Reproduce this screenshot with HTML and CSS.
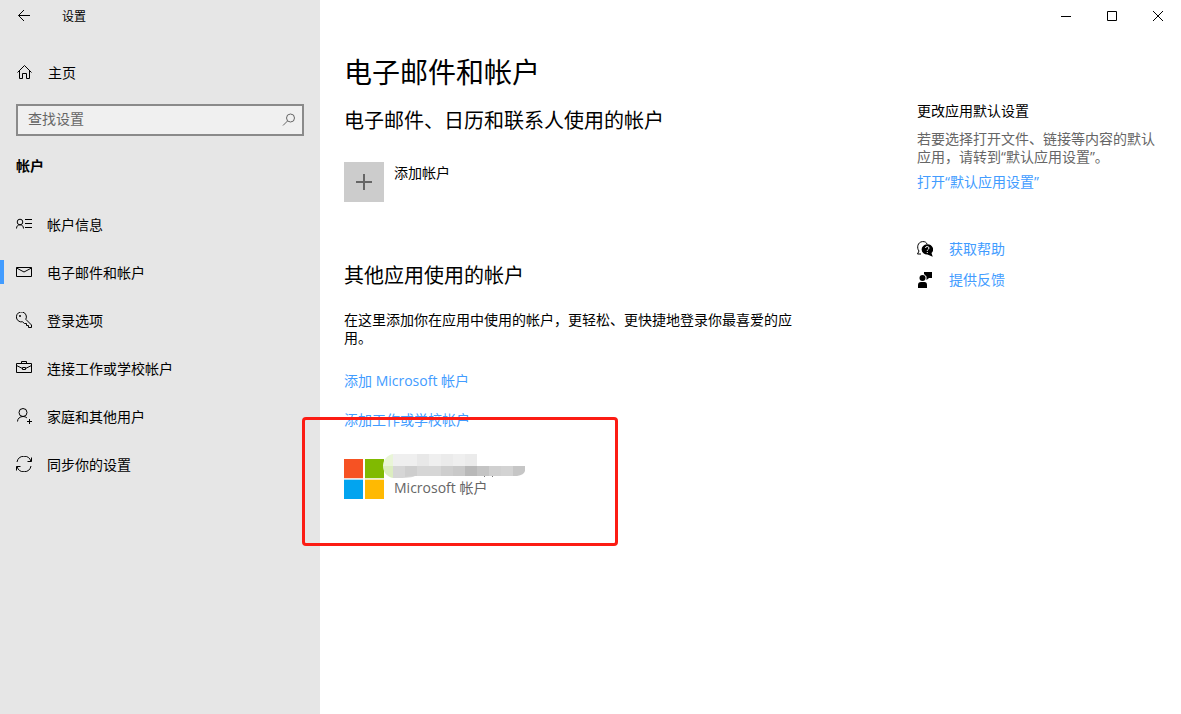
FILE: index.html
```html
<!DOCTYPE html>
<html lang="zh-CN">
<head>
<meta charset="utf-8">
<meta name="viewport" content="width=device-width, initial-scale=1">
<title>设置</title>
<link rel="stylesheet" href="styles.css">
</head>
<body>
<div class="window">
  <aside class="sidebar">
    <header class="titlebar">
      <button class="back" type="button" aria-label="返回">
        <svg class="icon" viewBox="0 0 16 16"><path d="M14 7.500H2.500M8 2L2.500 7.500 8 13"/></svg>
      </button>
      <span class="app-name">设置</span>
    </header>
    <a class="home" href="#">
      <svg class="icon" viewBox="0 0 16 16"><path d="M.5 8.500L7.500 1.500 14.500 8.500M2.500 7V14.500H5.500V9.500H9.500V14.500H12.500V7"/></svg>
      <span class="label">主页</span>
    </a>
    <form class="search">
      <input class="search-input" type="text" placeholder="查找设置" aria-label="查找设置">
      <button class="search-button" type="button" aria-label="搜索">
        <svg class="icon" viewBox="0 0 16 16"><circle cx="9.500" cy="6" r="4"/><path d="M6.500 9L2 13.500"/></svg>
      </button>
    </form>
    <h2 class="group">帐户</h2>
    <nav class="nav">
      <a class="nav-item" href="#">
        <svg class="icon" viewBox="0 0 16 16"><circle cx="4" cy="6" r="2.800"/><path d="M.5 12.500C.5 10 2 8.800 4 8.800S7.500 10 7.500 12.500M9 3.500H16M9 7.500H16M9 11.500H16"/></svg>
        <span class="label">帐户信息</span>
      </a>
      <a class="nav-item nav-item-active" href="#" aria-current="page">
        <svg class="icon" viewBox="0 0 16 16"><path d="M.5 3.500H15.500V12.500H.5ZM.5 4L8 8 15.500 4"/></svg>
        <span class="label">电子邮件和帐户</span>
      </a>
      <a class="nav-item" href="#">
        <svg class="icon" viewBox="0 0 16 16"><path d="M6.500 9.800L8.500 11.500H10.500V13.500H12.500V15.500H15.500V13L9.800 7.300A5 5 0 1 0 6.500 9.800Z"/><circle class="solid" cx="4" cy="4" r="1"/></svg>
        <span class="label">登录选项</span>
      </a>
      <a class="nav-item" href="#">
        <svg class="icon" viewBox="0 0 16 16"><path d="M.5 3.500H15.500V12.500H.5ZM5.500 3.500V1.500H10.500V3.500M.5 5.500L6.500 8.500M9.500 8.500L15.500 5.500M6.500 7.500H9.500V9.500H6.500Z"/></svg>
        <span class="label">连接工作或学校帐户</span>
      </a>
      <a class="nav-item" href="#">
        <svg class="icon" viewBox="0 0 16 16"><circle cx="7" cy="4.500" r="4"/><path d="M1.500 13.500C1.500 10.500 4 8.500 7 8.500 8.500 8.500 10 9 11 10M13.500 11V16M11 13.500H16"/></svg>
        <span class="label">家庭和其他用户</span>
      </a>
      <a class="nav-item" href="#">
        <svg class="icon" viewBox="0 0 16 16"><path d="M1 6A7.200 7.200 0 0 1 15 5.500M15.500 1.500V5.500H11.500M15 10A7.200 7.200 0 0 1 1 10.500M.5 14.500V10.500H4.500"/></svg>
        <span class="label">同步你的设置</span>
      </a>
    </nav>
  </aside>

  <div class="content">
    <header class="window-controls">
      <button class="control" type="button" aria-label="最小化"><svg class="icon" viewBox="0 0 16 16"><path d="M3 8.500H13"/></svg></button>
      <button class="control" type="button" aria-label="最大化"><svg class="icon" viewBox="0 0 16 16"><path d="M3.500 3.500H12.500V12.500H3.500Z"/></svg></button>
      <button class="control" type="button" aria-label="关闭"><svg class="icon" viewBox="0 0 16 16"><path d="M3 3L13 13M13 3L3 13"/></svg></button>
    </header>
    <div class="columns">
      <main class="main">
        <h1 class="title">电子邮件和帐户</h1>
        <h2 class="subtitle">电子邮件、日历和联系人使用的帐户</h2>
        <button class="add" type="button">
          <span class="add-tile"><svg class="plus" viewBox="0 0 16 16"><path d="M8 0V16M0 8H16"/></svg></span>
          <span class="label">添加帐户</span>
        </button>
        <h2 class="subtitle subtitle-apps">其他应用使用的帐户</h2>
        <p class="description">在这里添加你在应用中使用的帐户，更轻松、更快捷地登录你最喜爱的应用。</p>
        <a class="link" href="#">添加 Microsoft 帐户</a>
        <div class="accounts">
          <a class="link" href="#">添加工作或学校帐户</a>
          <div class="account">
            <svg class="logo" viewBox="0 0 40 40" role="img" aria-label="Microsoft">
              <path fill="#f65223" d="M0 0h19v19H0z"/><path fill="#80ba01" d="M21 0h19v19H21z"/>
              <path fill="#02a4ef" d="M0 21h19v19H0z"/><path fill="#ffb902" d="M21 21h19v19H21z"/>
              <path fill="#f9dcd2" d="M0 19h19v1H0z"/><path fill="#e5efcf" d="M21 19h19v1H21z"/>
              <path fill="#a6dff9" d="M0 20h19v1H0z"/><path fill="#fde5a6" d="M21 20h19v1H21z"/>
            </svg>
            <span class="account-type">Microsoft 帐户</span>
            <svg class="mosaic" viewBox="0 0 142 26" aria-hidden="true">
              <path fill="#e9f5d7" d="M10 0C4 1 0 6 0 12H10Z"/><path fill="#dcedc0" d="M0 12C0 18 4 23 10 24V12Z"/>
              <path fill="#efefef" d="M10 0H94V12H10Z"/><path fill="#e8e8e8" d="M34 0H46V12H34Z"/><path fill="#ebebeb" d="M58 0H70V12H58ZM82 0H94V12H82Z"/>
              <path fill="#d6d6d6" d="M10 12H82V22H32C28 24 18 24 10 24Z"/><path fill="#cecece" d="M22 12H34V22H28L22 23ZM58 12H70V22H58Z"/>
              <path fill="#c9c9c9" d="M70 12H82V22H70Z"/><path fill="#b9b9b9" d="M82 12H94V22H82Z"/><path fill="#c4c4c4" d="M94 12H106V22H94Z"/>
              <path fill="#d0d0d0" d="M106 12H118V22H106Z"/><path fill="#d3d3d3" d="M118 12H130V22H118Z"/><path fill="#c6c6c6" d="M130 12H142V17Q141 21 134 22H130Z"/>
              <path fill="#777" d="M101 22H102V23H101ZM109 22H110V23H109Z"/>
            </svg>
          </div>
          <div class="highlight"></div>
        </div>
      </main>
      <aside class="related">
        <h3 class="related-title">更改应用默认设置</h3>
        <p class="related-text">若要选择打开文件、链接等内容的默认应用，请转到“默认应用设置”。</p>
        <a class="link" href="#">打开“默认应用设置”</a>
        <div class="support">
          <a class="link support-link" href="#">
            <svg class="icon" viewBox="0 0 16 16"><path d="M2 10C-.5 7 .5 1 5.500 .6 8 .4 9.500 1.500 10 3M2 10L.5 13H4"/><path class="solid" d="M10 3.200A5.600 5.200 0 1 0 10.500 13.600L15.700 15.700 14.500 12A5.600 5.200 0 0 0 10 3.200Z"/><path class="mark" d="M8.500 7Q8.500 5.500 10.200 5.500T12 7Q12 8 10.300 9.300V10M10.300 11V12"/></svg>
            <span>获取帮助</span>
          </a>
          <a class="link support-link" href="#">
            <svg class="icon" viewBox="0 0 16 16"><circle class="solid" cx="5.500" cy="6" r="3"/><path class="solid" d="M1 16V13Q1 10 4 10H7.500Q10 10 10 13V16ZM7 0H15V6H12L9.500 8V4.500L7 2Z"/></svg>
            <span>提供反馈</span>
          </a>
        </div>
      </aside>
    </div>
  </div>
</div>
</body>
</html>
```
FILE: styles.css
```css
* {
  box-sizing: border-box;
}

body {
  margin: 0;
  background: #fff;
  color: #000;
  font: 14px/18px "Open Sans", "Noto Sans CJK SC", sans-serif;
}

h1, h2, h3, p {
  margin: 0;
  font-weight: 400;
}

a {
  color: inherit;
  text-decoration: none;
}

button {
  padding: 0;
  border: 0;
  background: none;
  color: inherit;
  font: inherit;
}

.window {
  display: flex;
  min-height: 100vh;
}

.sidebar {
  flex: 0 0 320px;
  background: #e6e6e6;
}

.icon {
  display: block;
  flex: none;
  width: 16px;
  height: 16px;
  fill: none;
  stroke: #000;
  stroke-width: 1;
}

.icon .solid {
  fill: #000;
  stroke: none;
}

.icon .mark {
  stroke: #fff;
}

.label {
  padding-top: 2px;
}

.titlebar {
  display: flex;
  align-items: center;
  height: 32px;
  font-size: 12px;
}

.back {
  display: grid;
  place-items: center;
  width: 48px;
  height: 32px;
}

.app-name {
  padding: 2px 0 0 14px;
}

.home {
  display: flex;
  align-items: center;
  gap: 15px;
  height: 48px;
  margin-top: 16px;
  padding: 0 17px;
}

.search {
  display: flex;
  align-items: center;
  height: 32px;
  margin: 8px 16px 0;
  border: 2px solid #8a8a8a;
  background: #f0f0f0;
}

.search-input {
  flex: 1;
  min-width: 0;
  height: 28px;
  padding: 0 10px 4px;
  border: 0;
  outline: 0;
  background: none;
  font: inherit;
}

.search-input::placeholder {
  color: #666;
  opacity: 1;
}

.search-button {
  padding-right: 5px;
}

.search-button .icon {
  stroke: #666;
}

.group {
  padding: 21px 16px 25px;
  font-size: 14px;
  font-weight: 700;
}

.nav-item {
  display: flex;
  align-items: center;
  gap: 15px;
  height: 48px;
  padding: 0 16px;
}

.nav-item-active {
  padding-left: 12px;
}

.nav-item-active::before {
  content: "";
  width: 4px;
  height: 24px;
  margin: 0 -3px 0 -12px;
  background: #429cff;
}

.content {
  flex: 1;
  min-width: 0;
}

.window-controls {
  display: flex;
  justify-content: flex-end;
}

.control {
  display: grid;
  place-items: center;
  width: 46px;
  height: 32px;
}

.columns {
  display: flex;
  justify-content: space-between;
  gap: 24px;
  padding: 22px 24px 0;
}

.main {
  max-width: 456px;
}

.title {
  font-size: 28px;
  line-height: 36px;
}

.subtitle {
  margin-top: 17px;
  font-size: 20px;
  line-height: 28px;
}

.subtitle-apps {
  margin-top: 60px;
}

.add {
  display: flex;
  gap: 10px;
  margin-top: 27px;
}

.add-tile {
  display: grid;
  place-items: center;
  width: 40px;
  height: 40px;
  background: #ccc;
}

.plus {
  width: 16px;
  height: 16px;
  fill: none;
  stroke: #666;
  stroke-width: 2;
}

.description {
  margin: 21px 0 25px;
}

.link {
  display: block;
  color: #429cff;
}

.accounts {
  position: relative;
  margin-top: 21px;
}

.account {
  position: relative;
  display: flex;
  align-items: flex-end;
  gap: 10px;
  margin-top: 30px;
}

.logo {
  width: 40px;
  height: 40px;
}

.account-type {
  padding-bottom: 2px;
  color: #666;
}

.mosaic {
  position: absolute;
  top: -5px;
  left: 39px;
  width: 142px;
  height: 26px;
}

.highlight {
  position: absolute;
  top: 6px;
  left: -42px;
  width: 316px;
  height: 129px;
  border: 3px solid #fc1c14;
  border-radius: 4px;
  pointer-events: none;
}

.related {
  flex: 0 0 240px;
  padding-top: 48px;
}

.related-title {
  font-size: 14px;
}

.related-text {
  margin: 10px 0 7px;
  color: #666;
}

.support {
  display: grid;
  gap: 13px;
  margin-top: 49px;
}

.support-link {
  display: flex;
  align-items: center;
  gap: 16px;
}
```
